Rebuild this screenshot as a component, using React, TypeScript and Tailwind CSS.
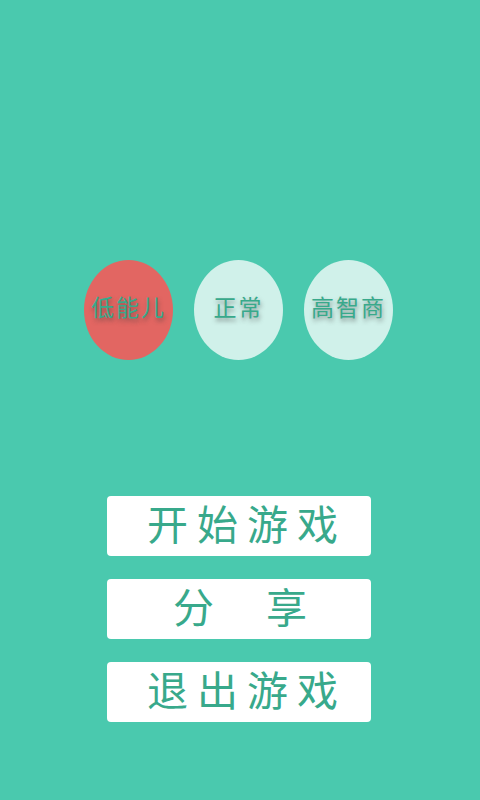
const levels = [
  { label: "低能儿", active: true },
  { label: "正常", active: false },
  { label: "高智商", active: false },
]

const buttonText = "text-[41px] font-normal leading-none text-[#38a98b]"

export default function App() {
  return (
    <div className="flex h-[800px] w-[480px] flex-col overflow-hidden bg-[#4ac9ae] pt-[260px] font-['Noto_Sans_CJK_SC',sans-serif]">
      <div className="flex gap-[21px] pl-[84px]">
        {levels.map((level) => (
          <div
            key={level.label}
            className={`flex h-[100px] w-[89px] items-center justify-center rounded-[50%] pb-[7px] ${
              level.active ? "bg-[#e26662]" : "bg-[#d0f1ea]"
            }`}
          >
            <span className="whitespace-nowrap text-[23px] font-normal leading-none tracking-[2px] text-[#38a98b] [text-shadow:1px_3px_4px_rgba(60,60,60,0.5)]">
              {level.label}
            </span>
          </div>
        ))}
      </div>

      <div className="ml-[107px] mt-[136px] flex w-[264px] flex-col gap-[23px]">
        <button className={`flex h-[60px] items-center justify-center rounded-[4px] bg-white pb-[8px] pl-[16px] tracking-[9px] ${buttonText}`}>
          开始游戏
        </button>
        <button className={`flex h-[60px] items-center justify-center gap-[52px] rounded-[4px] bg-white pb-[8px] pl-[2px] ${buttonText}`}>
          <span>分</span>
          <span>享</span>
        </button>
        <button className={`flex h-[60px] items-center justify-center rounded-[4px] bg-white pb-[8px] pl-[16px] tracking-[9px] ${buttonText}`}>
          退出游戏
        </button>
      </div>
    </div>
  )
}
